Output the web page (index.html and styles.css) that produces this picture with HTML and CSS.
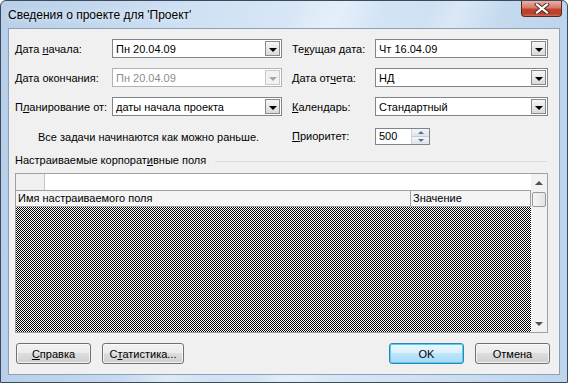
FILE: index.html
```html
<!DOCTYPE html>
<html lang="ru">
  <head>
    <meta charset="UTF-8" />
    <title>Сведения о проекте</title>
    <link rel="stylesheet" href="styles.css">
  </head>
  <body>
    <div class="window">
      <div class="titlebar">
        <span class="title">Сведения о проекте для 'Проект'</span>
        <div class="close">
          <svg width="18" height="11" viewBox="0 0 18 11">
            <path d="M4 1.5 L14 9.5 M14 1.5 L4 9.5" stroke="#4a2a26" stroke-width="4" stroke-linecap="square" />
            <path d="M4 1.5 L14 9.5 M14 1.5 L4 9.5" stroke="#ffffff" stroke-width="2.2" stroke-linecap="square" />
          </svg>
        </div>
      </div>

      <div class="client">
        <div class="fields">
          <label>Дата <u>н</u>ачала:</label>
          <div class="combo"><span>Пн 20.04.09</span><i class="drop"></i></div>
          <label class="right">Те<u>к</u>ущая дата:</label>
          <div class="combo"><span>Чт 16.04.09</span><i class="drop"></i></div>

          <label><u>Д</u>ата окончания:</label>
          <div class="combo disabled"><span>Пн 20.04.09</span><i class="drop"></i></div>
          <label class="right">Дата от<u>ч</u>ета:</label>
          <div class="combo"><span>НД</span><i class="drop"></i></div>

          <label>П<u>л</u>анирование от:</label>
          <div class="combo"><span>даты начала проекта</span><i class="drop"></i></div>
          <label class="right"><u>К</u>алендарь:</label>
          <div class="combo"><span>Стандартный</span><i class="drop"></i></div>

          <p class="note">Все задачи начинаются как можно раньше.</p>
          <label class="right"><u>П</u>риоритет:</label>
          <div class="spin-wrap">
            <div class="spin">
              <span>500</span>
              <div class="spin-btns">
                <i class="up"></i>
                <i class="down"></i>
              </div>
            </div>
          </div>
        </div>

        <div class="section">
          <span>Настраиваемые корпорат<u>и</u>вные поля</span>
          <div class="rule"></div>
        </div>

        <div class="table">
          <div class="table-main">
            <div class="row-edit">
              <div class="corner"></div>
              <div class="edit"></div>
            </div>
            <div class="row-head">
              <div class="col-name">Имя настраиваемого поля</div>
              <div class="col-val">Значение</div>
            </div>
            <div class="pattern"></div>
          </div>
          <div class="scrollbar">
            <i class="arrow-up"></i>
            <div class="thumb"></div>
            <div class="track"></div>
            <i class="arrow-down"></i>
          </div>
        </div>

        <div class="buttons">
          <button class="btn"><u>С</u>правка</button>
          <button class="btn stats">С<u>т</u>атистика...</button>
          <div class="spacer"></div>
          <button class="btn default">OK</button>
          <button class="btn">Отмена</button>
        </div>
      </div>
    </div>
  </body>
</html>
```

FILE: styles.css
```css
html,
body {
  margin: 0;
  padding: 0;
  width: 568px;
  height: 383px;
  overflow: hidden;
  background: #ffffff;
}
.window {
  box-sizing: border-box;
  width: 568px;
  height: 383px;
  padding: 0 7px 7px 7px;
  border: 1px solid #3b4a5c;
  border-radius: 6px 6px 0 0;
  background:
    linear-gradient(115deg, rgba(255, 255, 255, 0) 40%, rgba(255, 255, 255, 0.35) 46%, rgba(255, 255, 255, 0) 52%),
    linear-gradient(115deg, rgba(255, 255, 255, 0) 58%, rgba(255, 255, 255, 0.3) 62%, rgba(255, 255, 255, 0) 68%),
    linear-gradient(90deg, #b7cfe8 0%, #cddff2 30%, #d9e8f7 55%, #cfe1f3 75%, #bcd4ec 100%);
  display: flex;
  flex-direction: column;
  font-family: "Liberation Sans", Arial, sans-serif;
  font-size: 11px;
  color: #000;
}
.titlebar {
  height: 27px;
  display: flex;
  align-items: flex-start;
  justify-content: space-between;
}
.title {
  margin-top: 7px;
  font-size: 12px;
  color: #000;
  text-shadow: 0 0 6px rgba(255, 255, 255, 0.9);
}
.close {
  width: 41px;
  height: 16px;
  margin-right: -2px;
  box-sizing: border-box;
  border: 1px solid #5a2620;
  border-top: none;
  border-radius: 0 0 4px 4px;
  background: linear-gradient(#e8b1a6 0%, #d67a69 45%, #c0432f 55%, #b8412d 85%, #d56e58 100%);
  display: flex;
  align-items: center;
  justify-content: center;
}
.client {
  flex: 1;
  background: #f0f0f0;
  border: 1px solid #8ca1b8;
  padding: 10px 11px 0 6px;
  display: flex;
  flex-direction: column;
}
u {
  text-decoration: underline;
  text-underline-offset: 1px;
}

/* fields */
.fields {
  display: grid;
  grid-template-columns: 97px 170px 93px 173px;
  grid-template-rows: 19px 19px 19px 19px;
  row-gap: 10px;
  align-items: center;
}
.fields label {
  white-space: nowrap;
}
.fields label.right {
  padding-left: 10px;
}
.combo {
  box-sizing: border-box;
  height: 19px;
  border: 1px solid #7f858e;
  background: #fff;
  display: flex;
  align-items: center;
  padding-left: 3px;
}
.combo span {
  flex: 1;
  white-space: nowrap;
}
.drop {
  box-sizing: border-box;
  width: 15px;
  height: 15px;
  margin-right: 1px;
  border: 1px solid #8a8a8a;
  background: linear-gradient(#f6f6f6, #dadada);
  display: flex;
  align-items: center;
  justify-content: center;
}
.drop::after {
  content: "";
  border-left: 4px solid transparent;
  border-right: 4px solid transparent;
  border-top: 4px solid #000;
  margin-top: 2px;
}
.combo.disabled {
  border-color: #aeb3b8;
  color: #8d8d8d;
}
.combo.disabled .drop {
  border-color: #c9c9c9;
  background: #f2f2f2;
}
.combo.disabled .drop::after {
  border-top-color: #a6a6a6;
}
.note {
  grid-column: 1 / 3;
  margin: 0;
  padding-left: 23px;
  padding-top: 2px;
}
.spin-wrap {
  display: flex;
  align-items: center;
}
.spin {
  box-sizing: border-box;
  width: 55px;
  height: 17px;
  border: 1px solid #7f858e;
  background: #fff;
  display: flex;
  align-items: center;
  padding-left: 3px;
  margin-top: 1px;
}
.spin span {
  flex: 1;
}
.spin-btns {
  width: 17px;
  height: 15px;
  display: flex;
  flex-direction: column;
  border-left: 1px solid #d0d4da;
}
.spin-btns i {
  flex: 1;
  display: flex;
  align-items: center;
  justify-content: center;
  background: linear-gradient(#f4f6f9, #dfe3ea);
}
.spin-btns .up {
  border-bottom: 1px solid #c6ccd4;
}
.spin-btns .up::after {
  content: "";
  border-left: 3px solid transparent;
  border-right: 3px solid transparent;
  border-bottom: 3px solid #5a6f92;
}
.spin-btns .down::after {
  content: "";
  border-left: 3px solid transparent;
  border-right: 3px solid transparent;
  border-top: 3px solid #5a6f92;
}

/* section */
.section {
  margin-top: 8px;
  height: 14px;
  display: flex;
  align-items: center;
  gap: 9px;
}
.section span {
  white-space: nowrap;
}
.rule {
  flex: 1;
  height: 1px;
  margin-top: 2px;
  margin-right: 1px;
  background: #d5dfe5;
}

/* table */
.table {
  margin-top: 6px;
  box-sizing: border-box;
  width: 533px;
  height: 160px;
  border: 1px solid #a0a0a0;
  display: flex;
}
.table-main {
  flex: 1;
  display: flex;
  flex-direction: column;
}
.row-edit {
  height: 16px;
  display: flex;
  background: #fff;
}
.corner {
  width: 28px;
  background: #f0f0f0;
  border-right: 1px solid #c8c8c8;
}
.edit {
  flex: 1;
}
.row-head {
  box-sizing: border-box;
  height: 17px;
  display: flex;
  border-top: 1px solid #a0a0a0;
  border-bottom: 1px solid #a0a0a0;
  background: #f4f4f4;
  line-height: 15px;
}
.col-name {
  width: 392px;
  padding-left: 2px;
  border-right: 1px solid #a0a0a0;
}
.col-val {
  flex: 1;
  padding-left: 2px;
  border-right: 1px solid #a0a0a0;
}
/* 1px checker: horizontal stripes xor vertical stripes */
.pattern {
  flex: 1;
  background-image:
    linear-gradient(180deg, #fff 50%, #000 50%),
    linear-gradient(90deg, #000 50%, #fff 50%);
  background-size: 2px 2px;
  background-blend-mode: difference;
}
.scrollbar {
  width: 16px;
  display: flex;
  flex-direction: column;
  align-items: center;
  background: #f2f2f2;
}
.arrow-up,
.arrow-down {
  height: 17px;
  display: flex;
  align-items: center;
  justify-content: center;
}
.arrow-up::after {
  content: "";
  border-left: 4px solid transparent;
  border-right: 4px solid transparent;
  border-bottom: 4px solid #505050;
}
.arrow-down::after {
  content: "";
  border-left: 4px solid transparent;
  border-right: 4px solid transparent;
  border-top: 4px solid #505050;
}
.thumb {
  box-sizing: border-box;
  width: 14px;
  height: 15px;
  margin-top: 1px;
  border: 1px solid #9a9a9a;
  border-radius: 2px;
  background: linear-gradient(90deg, #f4f4f4, #e4e4e4);
}
.track {
  flex: 1;
}

/* buttons */
.buttons {
  margin: 10px -2px 0 1px;
  display: flex;
  gap: 11px;
}
.spacer {
  flex: 1;
}
.btn {
  box-sizing: border-box;
  width: 75px;
  height: 21px;
  padding: 0;
  font-family: "Liberation Sans", Arial, sans-serif;
  font-size: 11px;
  color: #000;
  border: 1px solid #707070;
  border-radius: 3px;
  background: linear-gradient(#f2f2f2 0%, #ebebeb 50%, #dddddd 50%, #cfcfcf 100%);
  box-shadow: inset 0 0 0 1px rgba(255, 255, 255, 0.7);
}
.btn.stats {
  width: 82px;
}
.btn.default {
  border-color: #3c7fb1;
  background: linear-gradient(#eaf6fd 0%, #d9f0fc 50%, #bee6fd 50%, #a7d9f5 100%);
  box-shadow: inset 0 0 0 1px #48d6f7;
}
```
